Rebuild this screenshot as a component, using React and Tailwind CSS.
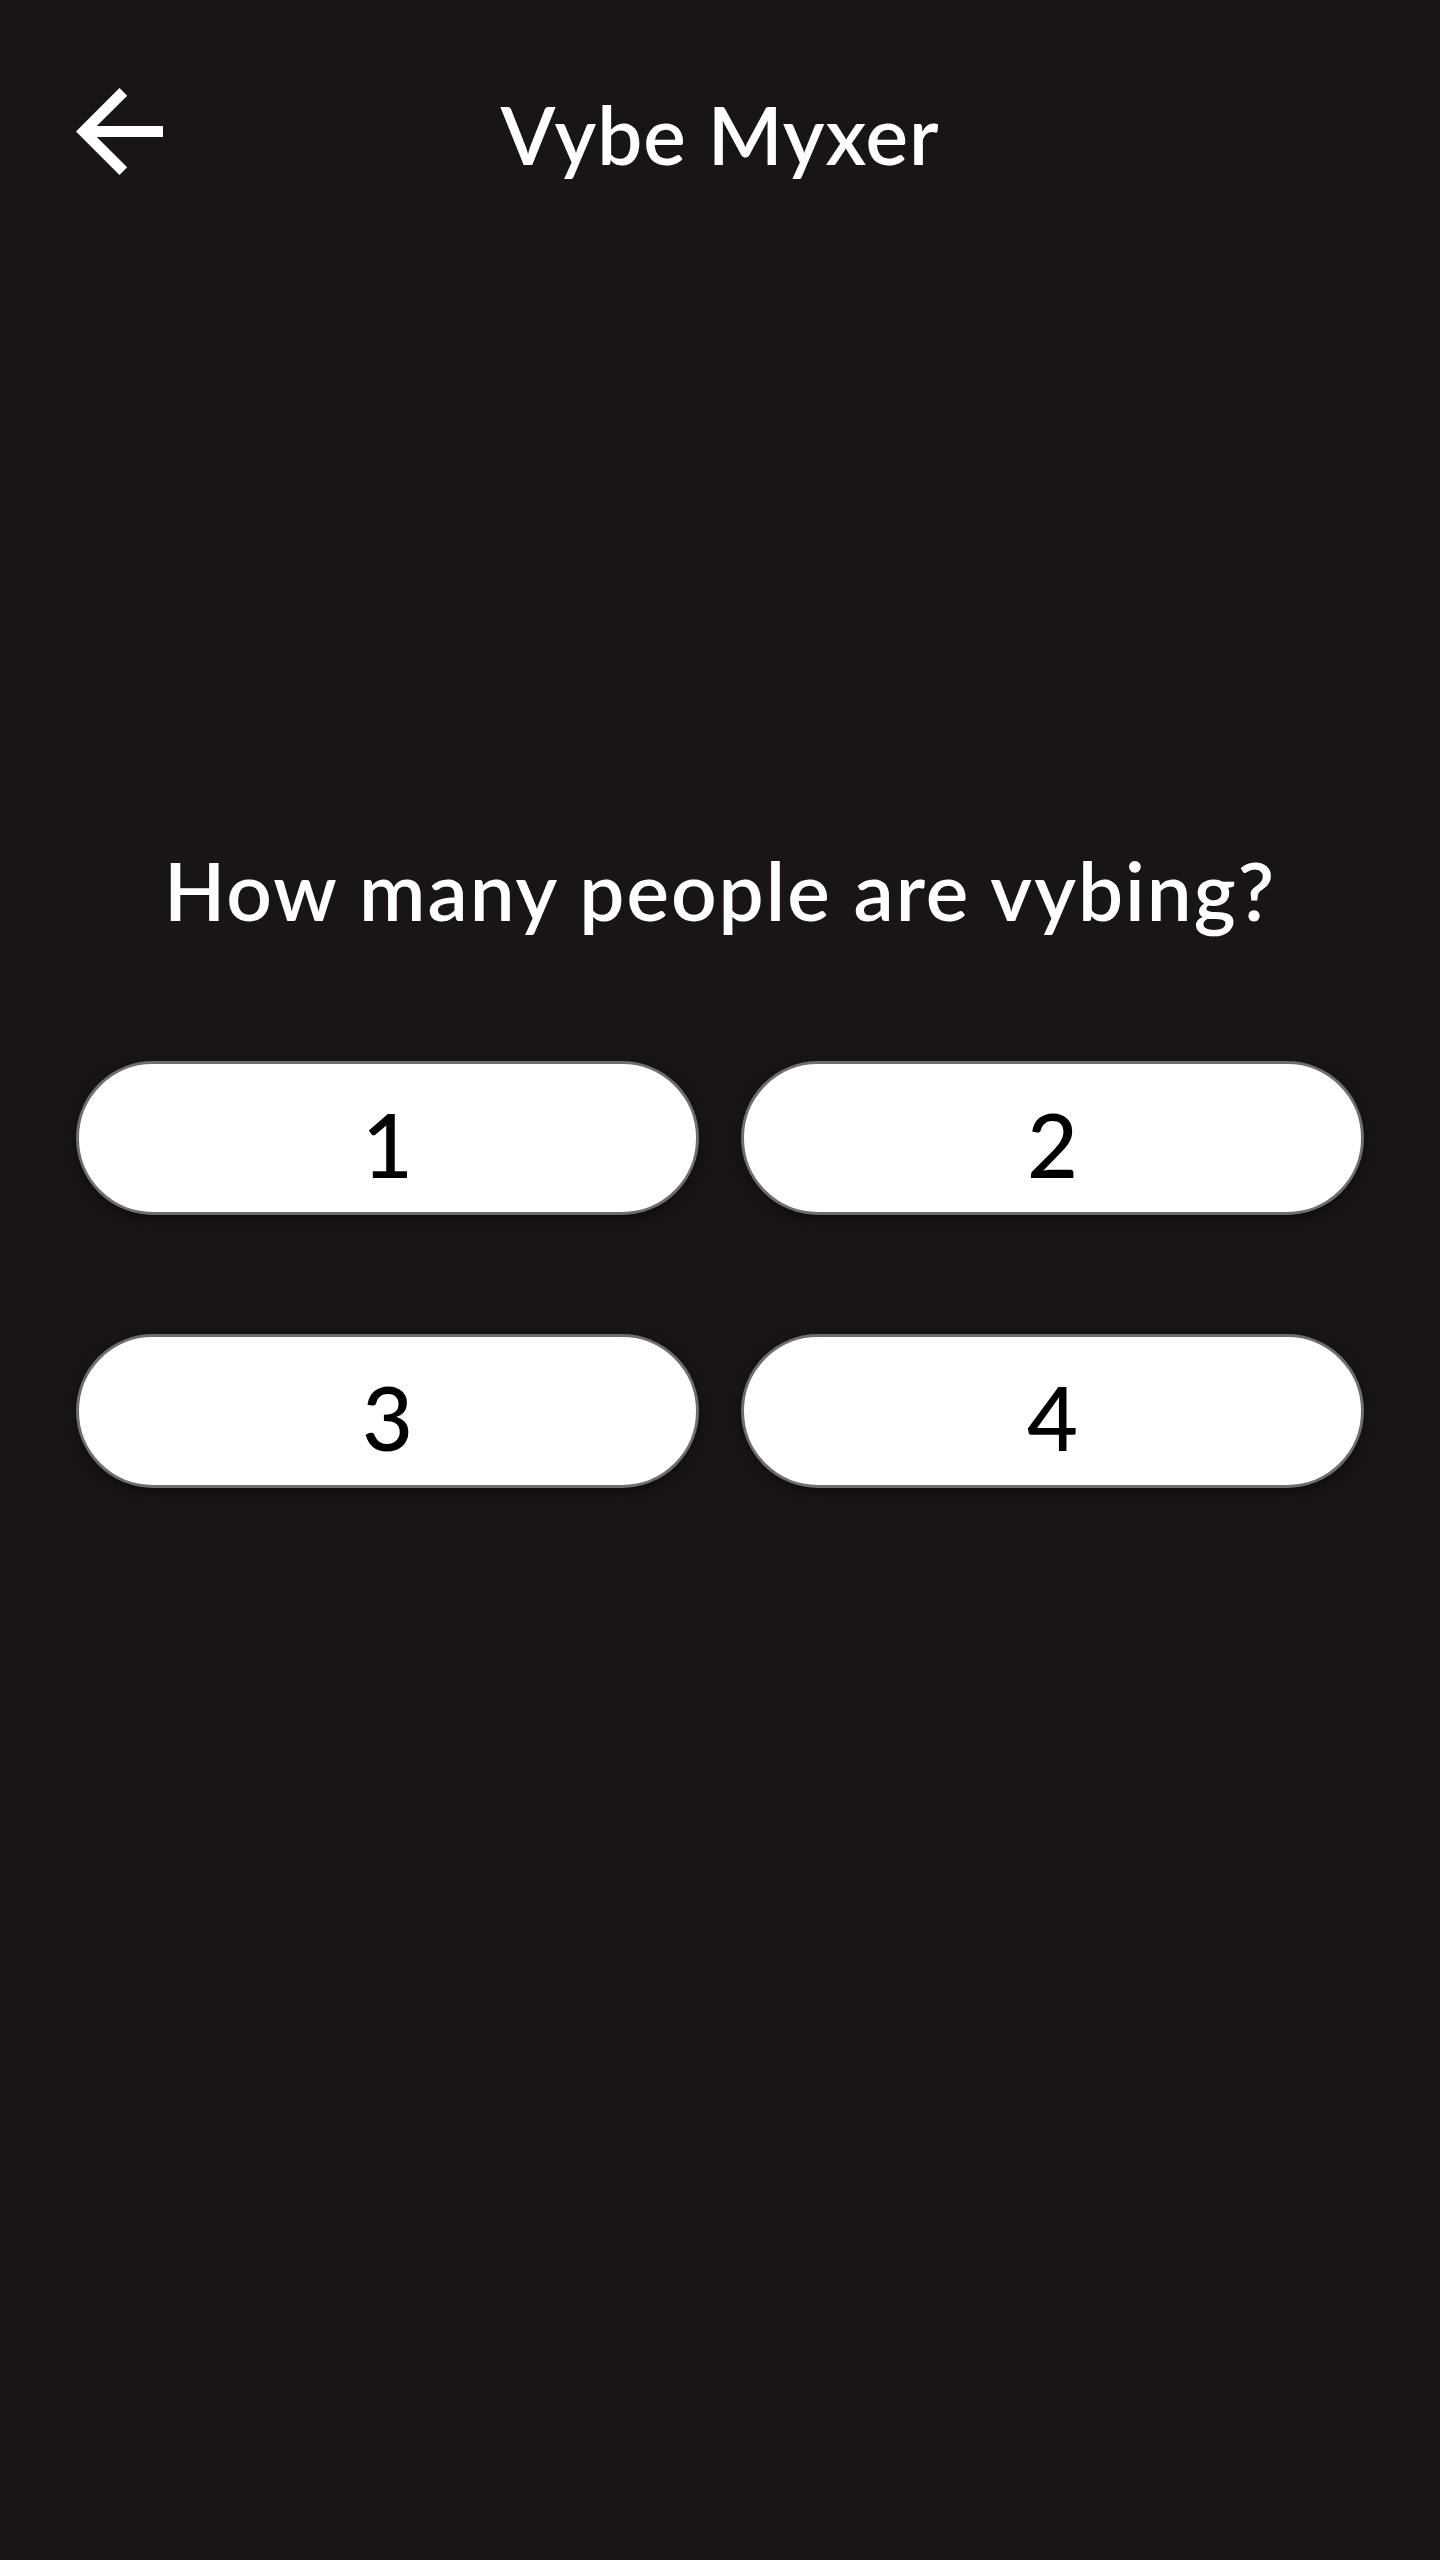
import { useState } from "react";

const options = [1, 2, 3, 4];

function BackArrow() {
  return (
    <svg viewBox="4 4 16 16" className="h-[87px] w-[87px]" fill="currentColor" aria-hidden="true">
      <path d="M20 11H7.83l5.59-5.59L12 4l-8 8 8 8 1.41-1.41L7.83 13H20v-2z" />
    </svg>
  );
}

export default function App() {
  const [selected, setSelected] = useState(null);

  return (
    <div className="min-h-[2560px] w-full bg-[#191514] font-['Lato','Liberation_Sans',sans-serif] text-white">
      <header className="grid grid-cols-[1fr_auto_1fr] items-start px-[76px] pt-[88px]">
        <button type="button" className="justify-self-start text-white" aria-label="Back">
          <BackArrow />
        </button>
        <h1 className="mt-[6px] text-[80px] font-semibold leading-[80px] tracking-[1px]">Vybe Myxer</h1>
        <div />
      </header>

      <h2 className="mt-[675px] text-center text-[80px] font-semibold leading-[80px] tracking-[2px]">
        How many people are vybing?
      </h2>

      <div className="mt-[131px] grid grid-cols-2 gap-x-[42px] gap-y-[119px] px-[76px]">
        {options.map((n) => (
          <button
            key={n}
            type="button"
            onClick={() => setSelected(n)}
            className={`flex h-[154px] items-center justify-center rounded-full border-[3px] border-[#6e6e6e] bg-white pt-[11px] text-[88px] font-medium leading-[88px] text-black shadow-[0_4px_12px_rgba(0,0,0,0.45)] ${
              selected === n ? "ring-4 ring-white/40" : ""
            }`}
          >
            {n}
          </button>
        ))}
      </div>
    </div>
  );
}
